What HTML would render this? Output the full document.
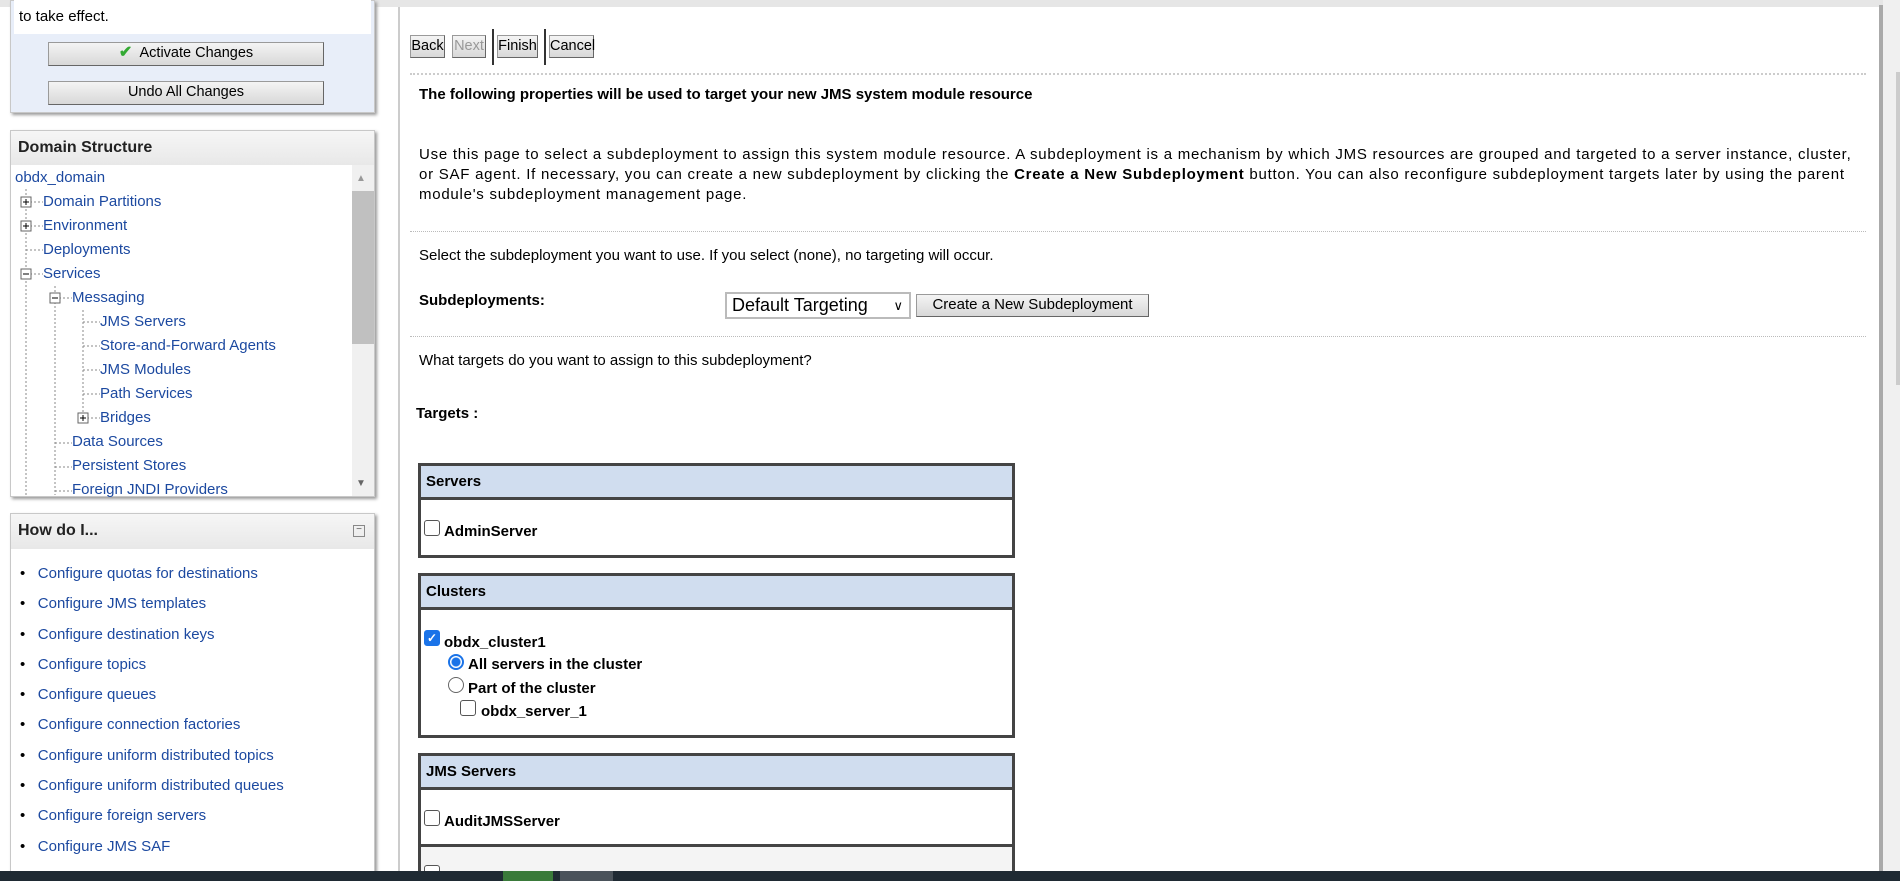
<!DOCTYPE html>
<html><head><meta charset="utf-8"><style>
*{margin:0;padding:0;box-sizing:border-box}
html,body{width:1900px;height:881px;overflow:hidden}
body{background:#fff;font-family:"Liberation Sans",sans-serif;font-size:14.5px;color:#000;position:relative}
.a{position:absolute;white-space:nowrap}
.btn{position:absolute;background:linear-gradient(#f4f4f4,#d8d8d8);border:1px solid #9a9a9a;border-bottom-color:#666;border-right-color:#666;font-size:14.5px;text-align:center;line-height:20px;white-space:nowrap}
.lk{color:#1c49a0}
.tree .a{color:#1c49a0;font-size:15px}
.dot{position:absolute;border-top:1px dotted #bbb;height:0}
.tbl{position:absolute;left:418px;width:597px;border:3px solid #444;background:#fff;overflow:hidden}
.th{background:#d0ddef;border-bottom:3px solid #444;height:34px;font-weight:bold;font-size:15px;line-height:32px;padding-left:5px}
.cb{position:absolute;width:16px;height:16px;border:1px solid #555;border-radius:3px;background:#fff}
.b{font-weight:bold;font-size:15px}
</style></head><body>
<div class="a" style="left:0;top:0;width:1900px;height:7px;background:#e6e6e6"></div>
<div class="a" style="left:10px;top:0;width:365px;height:113px;background:#e8eef9;border:1px solid #c8c8c8;box-shadow:2px 2px 3px #999"></div>
<div class="a" style="left:14px;top:0;width:357px;height:34px;background:#fff"></div>
<div class="a" style="left:19px;top:8px;font-size:15px">to take effect.</div>
<div class="btn" style="left:48px;top:42px;width:276px;height:24px">
<span style="color:#3a3;font-size:16px;font-weight:bold">✔</span>&nbsp; Activate Changes</div>
<div class="btn" style="left:48px;top:81px;width:276px;height:24px">Undo All Changes</div>
<div class="a" style="left:10px;top:130px;width:365px;height:367px;border:1px solid #c8c8c8;box-shadow:2px 2px 3px #999;background:#fff;overflow:hidden">
<div style="height:34px;background:linear-gradient(#f6f6f6,#e8e8e8);font-weight:bold;font-size:16px;line-height:34px;padding-left:7px;color:#222">Domain Structure</div>
<div style="position:absolute;left:341px;top:34px;width:22px;height:332px;background:#f0f0f0"></div>
<div style="position:absolute;left:341px;top:60px;width:22px;height:153px;background:#c0c0c0"></div>
<div style="position:absolute;left:345px;top:42px;color:#999;font-size:10px">▲</div>
<div style="position:absolute;left:345px;top:347px;color:#666;font-size:10px">▼</div>
</div>
<div class="tree">
<div class="a" style="left:15px;top:169px">obdx_domain</div>
<div class="a" style="left:43px;top:193px">Domain Partitions</div>
<div class="a" style="left:43px;top:217px">Environment</div>
<div class="a" style="left:43px;top:241px">Deployments</div>
<div class="a" style="left:43px;top:265px">Services</div>
<div class="a" style="left:72px;top:289px">Messaging</div>
<div class="a" style="left:100px;top:313px">JMS Servers</div>
<div class="a" style="left:100px;top:337px">Store-and-Forward Agents</div>
<div class="a" style="left:100px;top:361px">JMS Modules</div>
<div class="a" style="left:100px;top:385px">Path Services</div>
<div class="a" style="left:100px;top:409px">Bridges</div>
<div class="a" style="left:72px;top:433px">Data Sources</div>
<div class="a" style="left:72px;top:457px">Persistent Stores</div>
<div class="a" style="left:72px;top:481px">Foreign JNDI Providers</div>
</div>
<svg class="a" style="left:10px;top:165px" width="120" height="330"><g stroke="#888" stroke-dasharray="2,2" fill="none">
<path d="M16 24V330M16 37H33M16 61H33M16 85H33M16 109H33M45 121V330M45 133H62M45 278H62M45 302H62M45 326H62M73 145V253M73 157H90M73 181H90M73 205H90M73 229H90M73 253H90"/></g>
<g fill="#fff" stroke="#666"><rect x="11" y="32" width="10" height="10"/><rect x="11" y="56" width="10" height="10"/><rect x="11" y="104" width="10" height="10"/><rect x="40" y="128" width="10" height="10"/><rect x="68" y="248" width="10" height="10"/></g>
<g stroke="#000"><path d="M13 37h6M16 34v6M13 61h6M16 58v6M13 109h6M42 133h6M70 253h6M73 250v6"/></g></svg>
<div class="a" style="left:10px;top:513px;width:365px;height:370px;border:1px solid #c8c8c8;box-shadow:2px 2px 3px #999;background:#fff">
<div style="height:35px;background:linear-gradient(#f6f6f6,#e8e8e8);font-weight:bold;font-size:16px;line-height:34px;padding-left:7px;color:#222">How do I...</div>
<div style="position:absolute;left:342px;top:11px;width:12px;height:12px;border:1px solid #888;font-size:10px;line-height:8px;text-align:center;color:#555">−</div>
</div>
<div style="position:absolute;left:20px;top:559px;font-size:15px;line-height:30.3px">
<div>•&nbsp;&nbsp;&nbsp;<span class="lk">Configure quotas for destinations</span></div>
<div>•&nbsp;&nbsp;&nbsp;<span class="lk">Configure JMS templates</span></div>
<div>•&nbsp;&nbsp;&nbsp;<span class="lk">Configure destination keys</span></div>
<div>•&nbsp;&nbsp;&nbsp;<span class="lk">Configure topics</span></div>
<div>•&nbsp;&nbsp;&nbsp;<span class="lk">Configure queues</span></div>
<div>•&nbsp;&nbsp;&nbsp;<span class="lk">Configure connection factories</span></div>
<div>•&nbsp;&nbsp;&nbsp;<span class="lk">Configure uniform distributed topics</span></div>
<div>•&nbsp;&nbsp;&nbsp;<span class="lk">Configure uniform distributed queues</span></div>
<div>•&nbsp;&nbsp;&nbsp;<span class="lk">Configure foreign servers</span></div>
<div>•&nbsp;&nbsp;&nbsp;<span class="lk">Configure JMS SAF</span></div>
</div>
<div class="a" style="left:398px;top:7px;width:2px;height:864px;background:#ccc"></div>
<div class="a" style="left:1879px;top:5px;width:4px;height:866px;background:#aaa"></div>
<div class="a" style="left:1883px;top:0;width:17px;height:871px;background:#f0f0f0"></div>
<div class="a" style="left:1896px;top:72px;width:4px;height:313px;background:#ccc"></div>
<div class="btn" style="left:410px;top:35px;width:35px;height:23px">Back</div>
<div class="btn" style="left:452px;top:35px;width:34px;height:23px;color:#999">Next</div>
<div class="a" style="left:492px;top:29px;width:2px;height:36px;background:#333"></div>
<div class="btn" style="left:497px;top:35px;width:41px;height:23px">Finish</div>
<div class="a" style="left:544px;top:29px;width:2px;height:36px;background:#333"></div>
<div class="btn" style="left:549px;top:35px;width:45px;height:23px">Cancel</div>
<div class="dot" style="left:410px;top:73px;width:1456px;border-top:2px dotted #ccc"></div>
<div class="a b" style="left:419px;top:86px">The following properties will be used to target your new JMS system module resource</div>
<div class="a" style="left:419px;top:145px;font-size:15px;line-height:20px;width:1440px;white-space:normal;letter-spacing:0.75px">Use this page to select a subdeployment to assign this system module resource. A subdeployment is a mechanism by which JMS resources are grouped and targeted to a server instance, cluster, or SAF agent. If necessary, you can create a new subdeployment by clicking the <b>Create a New Subdeployment</b> button. You can also reconfigure subdeployment targets later by using the parent module's subdeployment management page.</div>
<div class="dot" style="left:410px;top:231px;width:1456px"></div>
<div class="a" style="left:419px;top:247px;font-size:15px">Select the subdeployment you want to use. If you select (none), no targeting will occur.</div>
<div class="a b" style="left:419px;top:292px">Subdeployments:</div>
<div class="a" style="left:725px;top:292px;width:186px;height:27px;border:2px solid #bbb;font-size:18px;line-height:23px;padding-left:5px">Default Targeting <span style="font-size:13px;position:absolute;right:6px">∨</span></div>
<div class="btn" style="left:916px;top:294px;width:233px;height:23px;font-size:15px">Create a New Subdeployment</div>
<div class="dot" style="left:410px;top:336px;width:1456px"></div>
<div class="a" style="left:419px;top:352px;font-size:15px">What targets do you want to assign to this subdeployment?</div>
<div class="a b" style="left:416px;top:405px">Targets :</div>
<div class="tbl" style="top:463px;height:95px"><div class="th">Servers</div>
<div class="cb" style="left:3px;top:54px"></div><div class="a b" style="left:23px;top:57px">AdminServer</div></div>
<div class="tbl" style="top:573px;height:165px"><div class="th">Clusters</div>
<div class="cb" style="left:3px;top:54px;background:#1a73e8;border-color:#1a73e8;color:#fff;font-size:12px;line-height:14px;text-align:center;font-weight:bold">✓</div>
<div class="a b" style="left:23px;top:58px">obdx_cluster1</div>
<div class="a" style="left:27px;top:78px;width:16px;height:16px;border:2px solid #1a73e8;border-radius:50%;background:radial-gradient(#1a73e8 0 4px,#fff 5px)"></div>
<div class="a b" style="left:47px;top:80px">All servers in the cluster</div>
<div class="a" style="left:27px;top:101px;width:16px;height:16px;border:1px solid #666;border-radius:50%"></div>
<div class="a b" style="left:47px;top:104px">Part of the cluster</div>
<div class="cb" style="left:39px;top:124px"></div><div class="a b" style="left:60px;top:127px">obdx_server_1</div></div>
<div class="tbl" style="top:753px;height:128px;border-bottom:none"><div class="th">JMS Servers</div>
<div class="cb" style="left:3px;top:54px"></div><div class="a b" style="left:23px;top:57px">AuditJMSServer</div>
<div style="position:absolute;left:0;top:88px;width:591px;height:3px;background:#444"></div>
<div style="position:absolute;left:0;top:91px;width:591px;height:50px;background:#f4f4f4"></div>
<div class="cb" style="left:3px;top:109px"></div></div>
<div class="a" style="left:0;top:871px;width:1900px;height:10px;background:#1f2a33"></div>
<div class="a" style="left:503px;top:871px;width:50px;height:10px;background:#3a7a3a"></div>
<div class="a" style="left:560px;top:871px;width:53px;height:10px;background:#4a525a"></div>
</body></html>
